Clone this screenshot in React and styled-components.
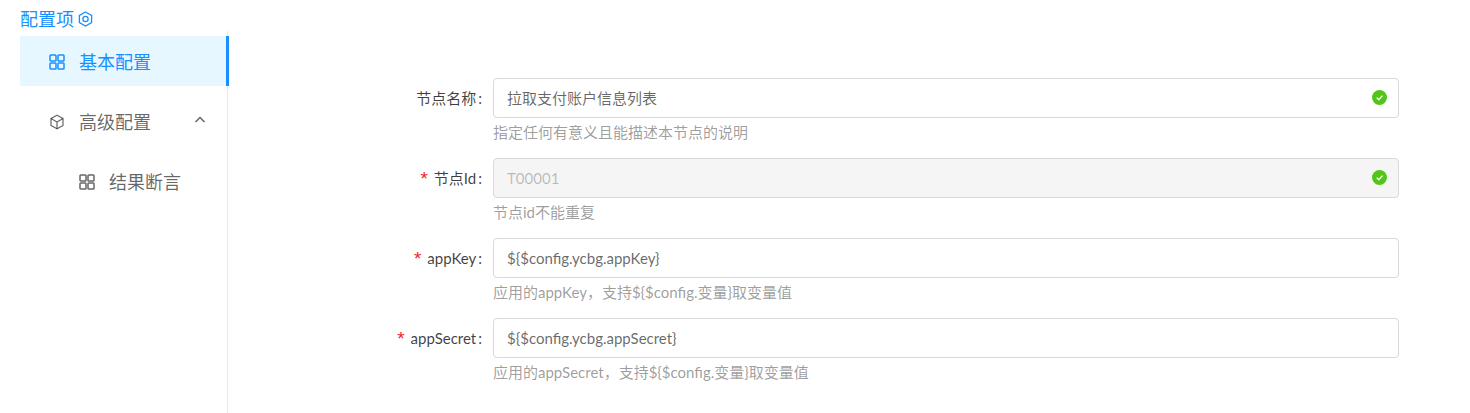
import styled, { createGlobalStyle } from "styled-components";

const GlobalStyle = createGlobalStyle`
    html, body {
        margin: 0;
        padding: 0;
        background: #fff;
    }

    body {
        font-family: Lato, "Noto Sans CJK SC", sans-serif;
        font-size: 15px;
        color: rgba(0, 0, 0, 0.6);
    }
`

const Page = styled.div`
    width: 1470px;
    height: 413px;
    overflow: hidden;
    display: flex;
    padding-left: 20px;
    box-sizing: border-box;
`

const Side = styled.aside`
    width: 208px;
    flex: none;
`

const SideTitle = styled.div`
    display: flex;
    align-items: center;
    gap: 4px;
    height: 31px;
    padding-top: 7px;
    box-sizing: border-box;
    color: #1890ff;
    font-size: 18px;
    line-height: 24px;
`

const Menu = styled.nav`
    height: 382px;
    border-right: 1px solid #e8e8e8;
    padding-top: 5px;
    box-sizing: border-box;
    width: 208px;
    position: relative;
`

const MenuItem = styled.div`
    display: flex;
    align-items: center;
    width: 209px;
    height: 50px;
    margin-bottom: 10px;
    padding-left: ${props => props.$indent}px;
    box-sizing: border-box;
    font-size: 18px;
    color: ${props => props.$active ? "#1890ff" : "rgba(0, 0, 0, 0.6)"};
    background: ${props => props.$active ? "#e6f7ff" : "transparent"};
    border-right: ${props => props.$active ? "3px solid #1890ff" : "none"};

    svg {
        flex: none;
        margin-right: 14px;
        position: relative;
        top: 1px;
    }
`

const Caret = styled.svg`
    margin-left: 43px;
    margin-right: 0 !important;
    top: -1px !important;
`

const Main = styled.main`
    flex: 1;
    padding-top: 78px;
`

const Row = styled.div`
    display: flex;
    height: 80px;
`

const Label = styled.label`
    width: 265px;
    flex: none;
    height: 39px;
    display: flex;
    align-items: center;
    justify-content: flex-end;
    color: rgba(0, 0, 0, 0.75);
    font-size: 15px;
    white-space: pre;
`

const Star = styled.span`
    color: #f5222d;
    font-family: "Liberation Mono", monospace;
    font-size: 19px;
    line-height: 17px;
    height: 11px;
    margin-right: 4px;
`

const Colon = styled.span`
    margin: 0 11px 0 2px;
`

const Control = styled.div`
    width: 906px;
    flex: none;
`

const InputBox = styled.div`
    height: 40px;
    box-sizing: border-box;
    border: 1px solid #d9d9d9;
    border-radius: 4px;
    display: flex;
    align-items: center;
    justify-content: space-between;
    padding: 0 11px 1px 13px;
    background: ${props => props.$disabled ? "#f5f5f5" : "#fff"};
    color: ${props => props.$disabled ? "rgba(0, 0, 0, 0.25)" : "rgba(0, 0, 0, 0.6)"};

    svg {
        flex: none;
    }
`

const Help = styled.div`
    color: rgba(0, 0, 0, 0.4);
    font-size: 15px;
    line-height: 22px;
    margin-top: 3px;
`

function GridIcon({ size = 16 }) {
    return (
        <svg width={size} height={size} viewBox="0 0 16 16" fill="none" stroke="currentColor" strokeWidth="1.5">
            <rect x="1" y="1" width="6" height="6" rx="0.8" />
            <rect x="9" y="1" width="6" height="6" rx="0.8" />
            <rect x="1" y="9" width="6" height="6" rx="0.8" />
            <rect x="9" y="9" width="6" height="6" rx="0.8" />
        </svg>
    )
}

function BoxIcon() {
    return (
        <svg width="16" height="16" viewBox="0 0 16 16" fill="none" stroke="currentColor" strokeWidth="1.2" strokeLinejoin="round">
            <path d="M8 1.2 14 4.5v7L8 14.8 2 11.5v-7z" />
            <path d="M2 4.5 8 8l6-3.5M8 8v6.8" />
        </svg>
    )
}

function HexIcon() {
    return (
        <svg width="15" height="16" viewBox="0 0 15 16" fill="none" stroke="#1890ff" strokeWidth="1.3">
            <path d="M7.5 1 13.6 4.5v7L7.5 15 1.4 11.5v-7z" />
            <circle cx="7.5" cy="8" r="2.6" />
        </svg>
    )
}

function CheckBadge() {
    return (
        <svg width="15" height="15" viewBox="0 0 15 15">
            <circle cx="7.5" cy="7.5" r="7.5" fill="#52c41a" />
            <path d="M4.6 7.6 6.8 9.7 10.5 5.6" fill="none" stroke="#fff" strokeWidth="1.3" />
        </svg>
    )
}

const fields = [
    { label: "节点名称", value: "拉取支付账户信息列表", help: "指定任何有意义且能描述本节点的说明", valid: true },
    { label: "节点Id", value: "T00001", help: "节点id不能重复", required: true, disabled: true, valid: true },
    { label: "appKey", value: "${$config.ycbg.appKey}", help: "应用的appKey，支持${$config.变量}取变量值", required: true },
    { label: "appSecret", value: "${$config.ycbg.appSecret}", help: "应用的appSecret，支持${$config.变量}取变量值", required: true },
]

export default function App() {
    return (
        <Page>
            <GlobalStyle />
            <Side>
                <SideTitle>配置项 <HexIcon /></SideTitle>
                <Menu>
                    <MenuItem $active $indent={29}><GridIcon />基本配置</MenuItem>
                    <MenuItem $indent={29}>
                        <BoxIcon />高级配置
                        <Caret width="12" height="12" viewBox="0 0 12 12" fill="none" stroke="currentColor" strokeWidth="1.5">
                            <path d="M1.5 8 6 3.5 10.5 8" />
                        </Caret>
                    </MenuItem>
                    <MenuItem $indent={59}><GridIcon />结果断言</MenuItem>
                </Menu>
            </Side>
            <Main>
                {fields.map(field => (
                    <Row key={field.label}>
                        <Label>
                            {field.required && <Star>*</Star>}
                            {field.label}
                            <Colon>:</Colon>
                        </Label>
                        <Control>
                            <InputBox $disabled={field.disabled}>
                                <span>{field.value}</span>
                                {field.valid && <CheckBadge />}
                            </InputBox>
                            <Help>{field.help}</Help>
                        </Control>
                    </Row>
                ))}
            </Main>
        </Page>
    )
}
